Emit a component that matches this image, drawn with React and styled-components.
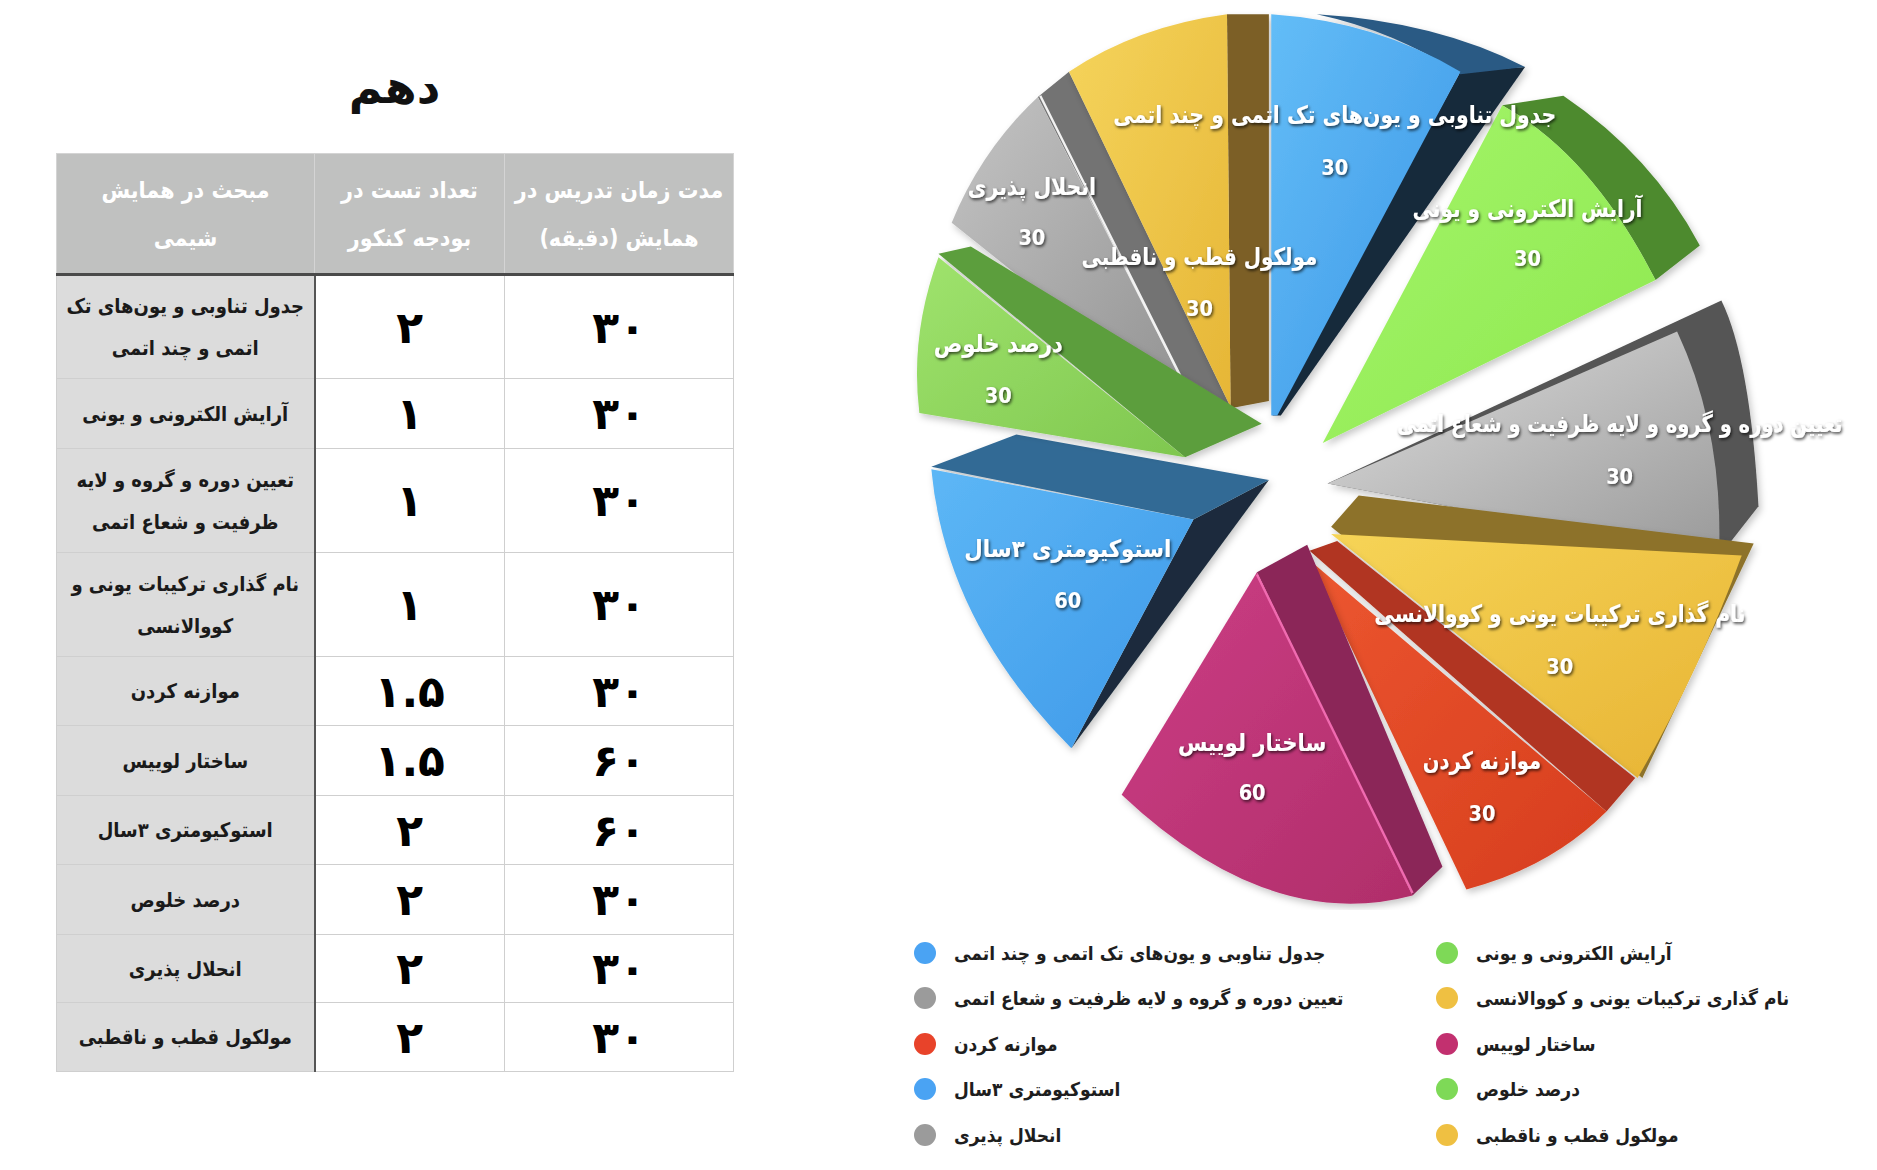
import React from "react";
import styled, { createGlobalStyle } from "styled-components";

const GlobalStyle = createGlobalStyle`
  html, body {
    margin: 0;
    padding: 0;
    background: #fff;
  }
  body {
    font-family: "DejaVu Sans Condensed", "DejaVu Sans", "Noto Sans", sans-serif;
  }
`;

const Page = styled.div`
  width: 1877px;
  height: 1170px;
  display: flex;
  overflow: hidden;
  background: #fff;
`;

const TablePanel = styled.section`
  width: 677px;
  padding: 52px 0 0 56px;
  display: flex;
  flex-direction: column;
`;

const Title = styled.h1`
  margin: 0 0 31px;
  height: 70px;
  line-height: 70px;
  text-align: center;
  direction: rtl;
  font-family: "DejaVu Sans", sans-serif;
  font-size: 46px;
  font-weight: 700;
  color: #111;
`;

const Table = styled.table`
  direction: rtl;
  width: 674px;
  border-collapse: collapse;
  table-layout: fixed;
`;

const HeadCell = styled.th`
  width: ${({ $w }) => $w}px;
  height: 119px;
  padding: 0;
  background: #c0c1c0;
  color: #fff;
  font-size: 23px;
  line-height: 48px;
  font-weight: 700;
  white-space: nowrap;
  border: 1px solid #d4d4d4;
  border-bottom: 3px solid #4a4a4a;
`;

const Row = styled.tr`
  height: ${({ $h }) => $h}px;
`;

const Cell = styled.td`
  padding: 0;
  text-align: center;
  vertical-align: middle;
  border: 1px solid #cfcfcf;
`;

const TopicCell = styled(Cell)`
  background: #dcdcdc;
  border-right: 2px solid #555;
  color: #1a1a1a;
  font-size: 20px;
  line-height: 42px;
  font-weight: 700;
  white-space: nowrap;
`;

const NumCell = styled(Cell)`
  color: #000;
  font-family: "DejaVu Sans", sans-serif;
  font-size: 44px;
  font-weight: 700;
`;

const ChartPanel = styled.section`
  width: 964px;
  margin-left: 177px;
  display: flex;
  flex-direction: column;
`;

const ChartSvg = styled.svg`
  display: block;
  width: 967px;
  height: 910px;
`;

const Legend = styled.div`
  display: grid;
  grid-template-columns: 522px 1fr;
  grid-auto-rows: 45.5px;
  margin-top: 20px;
  padding-left: 4px;
`;

const LegendItem = styled.div`
  display: flex;
  align-items: center;
  gap: 18px;
`;

const Dot = styled.span`
  width: 22px;
  height: 22px;
  border-radius: 50%;
  background: ${({ $color }) => $color};
  flex-shrink: 0;
`;

const LegendText = styled.span`
  direction: rtl;
  font-size: 19px;
  font-weight: 700;
  color: #1e1e1e;
  white-space: nowrap;
`;

const header = [
  { w: 228, lines: ["مدت زمان تدریس در", "همایش (دقیقه)"] },
  { w: 189, lines: ["تعداد تست در", "بودجه کنکور"] },
  { w: 257, lines: ["مبحث در همایش", "شیمی"] },
];

const rows = [
  { h: 104, time: "۳۰", count: "۲", topic: ["جدول تناوبی و یون‌های تک", "اتمی و چند اتمی"] },
  { h: 70, time: "۳۰", count: "۱", topic: ["آرایش الکترونی و یونی"] },
  { h: 104, time: "۳۰", count: "۱", topic: ["تعیین دوره و گروه و لایه", "ظرفیت و شعاع اتمی"] },
  { h: 104, time: "۳۰", count: "۱", topic: ["نام گذاری ترکیبات یونی و", "کووالانسی"] },
  { h: 69, time: "۳۰", count: "۱.۵", topic: ["موازنه کردن"] },
  { h: 70, time: "۶۰", count: "۱.۵", topic: ["ساختار لوییس"] },
  { h: 69, time: "۶۰", count: "۲", topic: ["استوکیومتری ۳سال"] },
  { h: 70, time: "۳۰", count: "۲", topic: ["درصد خلوص"] },
  { h: 68, time: "۳۰", count: "۲", topic: ["انحلال پذیری"] },
  { h: 69, time: "۳۰", count: "۲", topic: ["مولکول قطب و ناقطبی"] },
];

// chart coordinates are in the 1568px-wide frame of the original slide
const slices = [
  {
    id: "g1",
    colors: ["#c4c4c4", "#8f8f8f"],
    side: "M867,81 L893,60 L1028,340 L1007,354 Z",
    sideColor: "#737373",
    face: "M867,81 Q820,125 795,186 L1005,354 Z",
    edge: "M869,80 L1005,352",
  },
  {
    id: "y1",
    colors: ["#f5d45c", "#e6b636"],
    side: "M1025,12 L1060,12 L1060,335 L1028,341 Z",
    sideColor: "#7b5f26",
    face: "M893,60 Q950,22 1025,12 L1028,340 Z",
  },
  {
    id: "b1",
    colors: ["#63bdf7", "#3b95e6"],
    side: "M1220,60 L1274,56 L1070,347 L1063,347 Z",
    sideColor: "#17293b",
    rim: "M1100,12 Q1200,18 1274,56 L1220,62 Q1165,26 1100,12 Z",
    rimColor: "#2a5a84",
    face: "M1062,12 Q1150,18 1220,60 L1067,347 L1062,347 Z",
  },
  {
    id: "gr1",
    colors: ["#a4f56a", "#8ee84f"],
    side: "M1255,88 L1306,80 Q1380,130 1420,205 L1383,234 Q1330,130 1255,88 Z",
    sideColor: "#4e8a2f",
    face: "M1255,88 Q1330,130 1383,234 L1105,370 Z",
  },
  {
    id: "g2",
    colors: ["#dedede", "#9a9a9a"],
    side: "M1109,404 L1438,251 Q1462,300 1469,423 L1436,465 Z",
    sideColor: "#545454",
    face: "M1109,404 L1401,277 Q1440,360 1436,465 Z",
  },
  {
    id: "y2",
    colors: ["#f6d456", "#e7b334"],
    side: "M1112,440 L1135,414 L1465,454 L1372,650 Z",
    sideColor: "#8d7229",
    face: "M1112,446 L1455,464 Q1420,560 1368,650 Z",
  },
  {
    id: "r1",
    colors: ["#ec5630", "#d63d1d"],
    side: "M1094,460 L1117,452 L1366,650 L1342,678 Z",
    sideColor: "#b13420",
    face: "M1094,468 L1342,678 Q1295,725 1225,743 Z",
  },
  {
    id: "m1",
    colors: ["#cc3e85", "#b02e6a"],
    side: "M1050,478 L1092,455 L1205,724 L1180,748 Z",
    sideColor: "#8b2658",
    face: "M1050,478 L1180,748 Q1060,780 937,664 Z",
    edge: "M1050,480 L1180,746",
    edgeColor: "#f06bb0",
  },
  {
    id: "b2",
    colors: ["#5db7f6", "#3d98e8"],
    rim: "M778,390 L849,363 L1060,401 L997,434 Z",
    rimColor: "#336a95",
    side: "M997,434 L1060,401 L895,625 Z",
    sideColor: "#1b2c3c",
    face: "M778,392 L997,434 L895,625 Q790,520 778,392 Z",
  },
  {
    id: "gr2",
    colors: ["#9fe36d", "#7fc74f"],
    side: "M784,212 L811,206 L1054,354 L990,382 Z",
    sideColor: "#5c9e3c",
    face: "M784,215 L990,382 L768,345 Q760,280 784,215 Z",
  },
];

const labels = [
  { t: "جدول تناوبی و یون‌های تک اتمی و چند اتمی", x: 1115, y: 96, w: 370, v: "30", vy: 140 },
  { t: "آرایش الکترونی و یونی", x: 1276, y: 175, w: 192, v: "30", vy: 216 },
  { t: "انحلال پذیری", x: 862, y: 156, w: 107, v: "30", vy: 198 },
  { t: "مولکول قطب و ناقطبی", x: 1002, y: 215, w: 197, v: "30", vy: 258 },
  { t: "درصد خلوص", x: 834, y: 287, w: 108, v: "30", vy: 330 },
  { t: "تعیین دوره و گروه و لایه ظرفیت و شعاع اتمی", x: 1353, y: 354, w: 372, v: "30", vy: 398 },
  { t: "استوکیومتری ۳سال", x: 892, y: 459, w: 173, v: "60", vy: 502 },
  { t: "نام گذاری ترکیبات یونی و کووالانسی", x: 1303, y: 513, w: 310, v: "30", vy: 557 },
  { t: "ساختار لوییس", x: 1046, y: 621, w: 124, v: "60", vy: 662 },
  { t: "موازنه کردن", x: 1238, y: 636, w: 99, v: "30", vy: 680 },
];

const legend = [
  { c: "#4aa3f3", t: "جدول تناوبی و یون‌های تک اتمی و چند اتمی" },
  { c: "#7ed957", t: "آرایش الکترونی و یونی" },
  { c: "#9b9b9b", t: "تعیین دوره و گروه و لایه ظرفیت و شعاع اتمی" },
  { c: "#efc042", t: "نام گذاری ترکیبات یونی و کووالانسی" },
  { c: "#e8432a", t: "موازنه کردن" },
  { c: "#c2306f", t: "ساختار لوییس" },
  { c: "#4aa3f3", t: "استوکیومتری ۳سال" },
  { c: "#7ed957", t: "درصد خلوص" },
  { c: "#9b9b9b", t: "انحلال پذیری" },
  { c: "#efc042", t: "مولکول قطب و ناقطبی" },
];

const PieChart = () => (
  <ChartSvg viewBox="760.2 0 807.8 760.2">
    <defs>
      {slices.map((s) => (
        <linearGradient key={s.id} id={`grad-${s.id}`} x1="0" y1="0" x2="1" y2="1">
          <stop offset="0" stopColor={s.colors[0]} />
          <stop offset="1" stopColor={s.colors[1]} />
        </linearGradient>
      ))}
      <filter id="sliceShadow" x="-10%" y="-10%" width="120%" height="120%">
        <feDropShadow dx="2" dy="3" stdDeviation="3" floodColor="#000" floodOpacity="0.22" />
      </filter>
      <filter id="textShadow" x="-5%" y="-30%" width="110%" height="160%">
        <feDropShadow dx="1" dy="1.5" stdDeviation="1.4" floodColor="#000" floodOpacity="0.7" />
      </filter>
    </defs>

    {slices.map((s) => (
      <g key={s.id} filter="url(#sliceShadow)">
        <path d={s.side} fill={s.sideColor} />
        {s.rim && <path d={s.rim} fill={s.rimColor} />}
        <path d={s.face} fill={`url(#grad-${s.id})`} />
        {s.edge && (
          <path d={s.edge} stroke={s.edgeColor || "#f2f2f2"} strokeWidth="2" fill="none" />
        )}
      </g>
    ))}

    <g
      fill="#fff"
      fontFamily='"DejaVu Sans Condensed", "DejaVu Sans", sans-serif'
      fontWeight="700"
      textAnchor="middle"
      dominantBaseline="central"
      filter="url(#textShadow)"
    >
      {labels.map((l) => (
        <React.Fragment key={l.t}>
          <text
            x={l.x}
            y={l.y}
            fontSize="20"
            direction="rtl"
            textLength={l.w}
            lengthAdjust="spacingAndGlyphs"
          >
            {l.t}
          </text>
          <text x={l.x} y={l.vy} fontSize="18">
            {l.v}
          </text>
        </React.Fragment>
      ))}
    </g>
  </ChartSvg>
);

const App = () => (
  <Page>
    <GlobalStyle />
    <TablePanel>
      <Title>دهم</Title>
      <Table>
        <thead>
          <tr>
            {header.map((h) => (
              <HeadCell key={h.lines[0]} $w={h.w}>
                {h.lines[0]}
                <br />
                {h.lines[1]}
              </HeadCell>
            ))}
          </tr>
        </thead>
        <tbody>
          {rows.map((r) => (
            <Row key={r.topic[0]} $h={r.h}>
              <NumCell>{r.time}</NumCell>
              <NumCell>{r.count}</NumCell>
              <TopicCell>
                {r.topic.map((line, i) => (
                  <React.Fragment key={line}>
                    {i > 0 && <br />}
                    {line}
                  </React.Fragment>
                ))}
              </TopicCell>
            </Row>
          ))}
        </tbody>
      </Table>
    </TablePanel>

    <ChartPanel>
      <PieChart />
      <Legend>
        {legend.map((item) => (
          <LegendItem key={item.t}>
            <Dot $color={item.c} />
            <LegendText>{item.t}</LegendText>
          </LegendItem>
        ))}
      </Legend>
    </ChartPanel>
  </Page>
);

export default App;
